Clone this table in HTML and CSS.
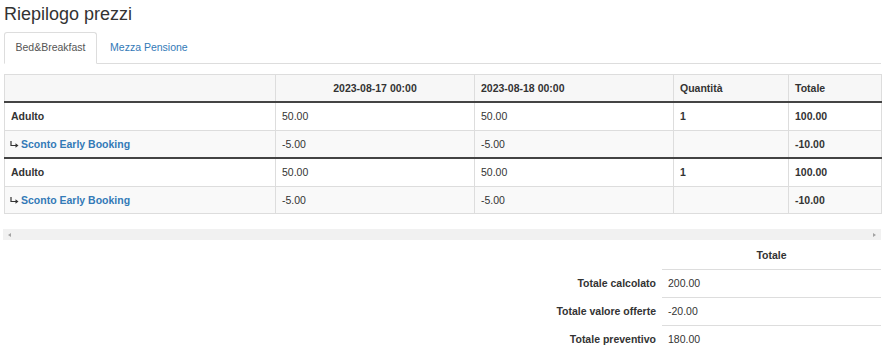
FILE: index.html
```html
<!DOCTYPE html>
<html lang="it">
<head>
<meta charset="utf-8">
<title>Riepilogo prezzi</title>
<link rel="stylesheet" href="styles.css">
</head>
<body>
<div class="page">
  <h3 class="title">Riepilogo prezzi</h3>
  <ul class="tabs">
    <li class="tab active"><a href="#">Bed&amp;Breakfast</a></li>
    <li class="tab"><a href="#">Mezza Pensione</a></li>
  </ul>
  <div class="tab-content">
    <div class="table-wrap">
      <table class="prices">
        <colgroup>
          <col class="c-name">
          <col class="c-date">
          <col class="c-date">
          <col class="c-qty">
          <col class="c-tot">
        </colgroup>
        <thead>
          <tr>
            <th></th>
            <th class="center">2023-08-17 00:00</th>
            <th>2023-08-18 00:00</th>
            <th>Quantità</th>
            <th>Totale</th>
          </tr>
        </thead>
        <tbody>
          <tr>
            <td class="b">Adulto</td>
            <td>50.00</td>
            <td>50.00</td>
            <td class="b">1</td>
            <td class="b">100.00</td>
          </tr>
          <tr class="sub">
            <td><svg class="arr" width="9" height="7" viewBox="0 0 9 7"><path d="M1 0V4.5H7.5" fill="none" stroke="#333" stroke-width="1.2"/><path d="M5.5 2.3L8.5 4.5L5.5 6.7Z" fill="#333"/></svg><a class="lnk" href="#">Sconto Early Booking</a></td>
            <td>-5.00</td>
            <td>-5.00</td>
            <td></td>
            <td class="b">-10.00</td>
          </tr>
          <tr class="group">
            <td class="b">Adulto</td>
            <td>50.00</td>
            <td>50.00</td>
            <td class="b">1</td>
            <td class="b">100.00</td>
          </tr>
          <tr class="sub">
            <td><svg class="arr" width="9" height="7" viewBox="0 0 9 7"><path d="M1 0V4.5H7.5" fill="none" stroke="#333" stroke-width="1.2"/><path d="M5.5 2.3L8.5 4.5L5.5 6.7Z" fill="#333"/></svg><a class="lnk" href="#">Sconto Early Booking</a></td>
            <td>-5.00</td>
            <td>-5.00</td>
            <td></td>
            <td class="b">-10.00</td>
          </tr>
        </tbody>
      </table>
    </div>
    <div class="hscroll"><span class="sarrow left"></span><span class="sarrow right"></span></div>
    <table class="totals">
      <tr>
        <th class="lbl"></th>
        <th class="val head">Totale</th>
      </tr>
      <tr>
        <th class="lbl">Totale calcolato</th>
        <td class="val">200.00</td>
      </tr>
      <tr>
        <th class="lbl">Totale valore offerte</th>
        <td class="val">-20.00</td>
      </tr>
      <tr>
        <th class="lbl">Totale preventivo</th>
        <td class="val">180.00</td>
      </tr>
    </table>
  </div>
</div>
</body>
</html>
```

FILE: styles.css
```css
* { box-sizing: border-box; }

body {
  margin: 0;
  font-family: "Liberation Sans", Arial, sans-serif;
  font-size: 10.5px;
  line-height: 15px;
  color: #333;
  background: #fff;
}

.page {
  padding: 0 8px 0 4px;
}

.title {
  margin: 5px 0 7px;
  font-size: 18px;
  font-weight: 500;
  line-height: 19.8px;
  color: #333;
}

.tabs {
  display: flex;
  list-style: none;
  margin: 0;
  padding: 0;
  border-bottom: 1px solid #ddd;
}

.tab {
  margin-right: 1.5px;
  margin-bottom: -1px;
}

.tab a {
  display: block;
  padding: 7.5px 10.5px;
  border: 1px solid transparent;
  border-radius: 3px 3px 0 0;
  color: #337ab7;
  text-decoration: none;
}

.tab.active a {
  color: #555;
  background: #fff;
  border-color: #ddd #ddd transparent;
}

.tab-content {
  padding-top: 10px;
}

.table-wrap {
  width: 100%;
}

.prices {
  width: 100%;
  table-layout: fixed;
  border-collapse: collapse;
  border: 1px solid #ddd;
  margin-bottom: 15px;
}

.c-name { width: 271px; }
.c-date { width: 199px; }
.c-qty { width: 115px; }
.c-tot { width: 93px; }

.prices th,
.prices td {
  padding: 6px 6px 5.5px;
  border: 1px solid #ddd;
  text-align: left;
  vertical-align: top;
  white-space: nowrap;
}

.prices thead th {
  background: #f7f7f7;
  font-weight: bold;
  border-bottom: 2px solid #444;
}

.prices th.center {
  text-align: center;
}

.prices .b {
  font-weight: bold;
}

.prices tr.sub td {
  background: #f9f9f9;
}

.prices tr.group td {
  border-top: 2px solid #444;
}

.arr {
  display: inline-block;
  vertical-align: baseline;
  margin-left: -1px;
  margin-right: 2px;
}

.lnk {
  color: #337ab7;
  font-weight: bold;
  text-decoration: none;
}

.hscroll {
  height: 11px;
  margin-left: -1px;
  background: #f1f1f1;
  display: flex;
  align-items: center;
  justify-content: space-between;
  padding: 0 5px;
}

.sarrow {
  width: 0;
  height: 0;
  border-top: 2.5px solid transparent;
  border-bottom: 2.5px solid transparent;
}

.sarrow.left {
  border-right: 3px solid #a3a3a3;
}

.sarrow.right {
  border-left: 3px solid #a3a3a3;
}

.totals {
  margin-left: auto;
  margin-top: 2px;
  border-collapse: collapse;
}

.totals th,
.totals td {
  padding: 6px;
  line-height: 15px;
  vertical-align: top;
}

.totals .lbl {
  text-align: right;
  font-weight: bold;
  white-space: nowrap;
}

.totals .val {
  width: 219px;
  text-align: left;
  border-top: 1px solid #ddd;
}

.totals .val.head {
  border-top: none;
  text-align: center;
  font-weight: bold;
}
```
